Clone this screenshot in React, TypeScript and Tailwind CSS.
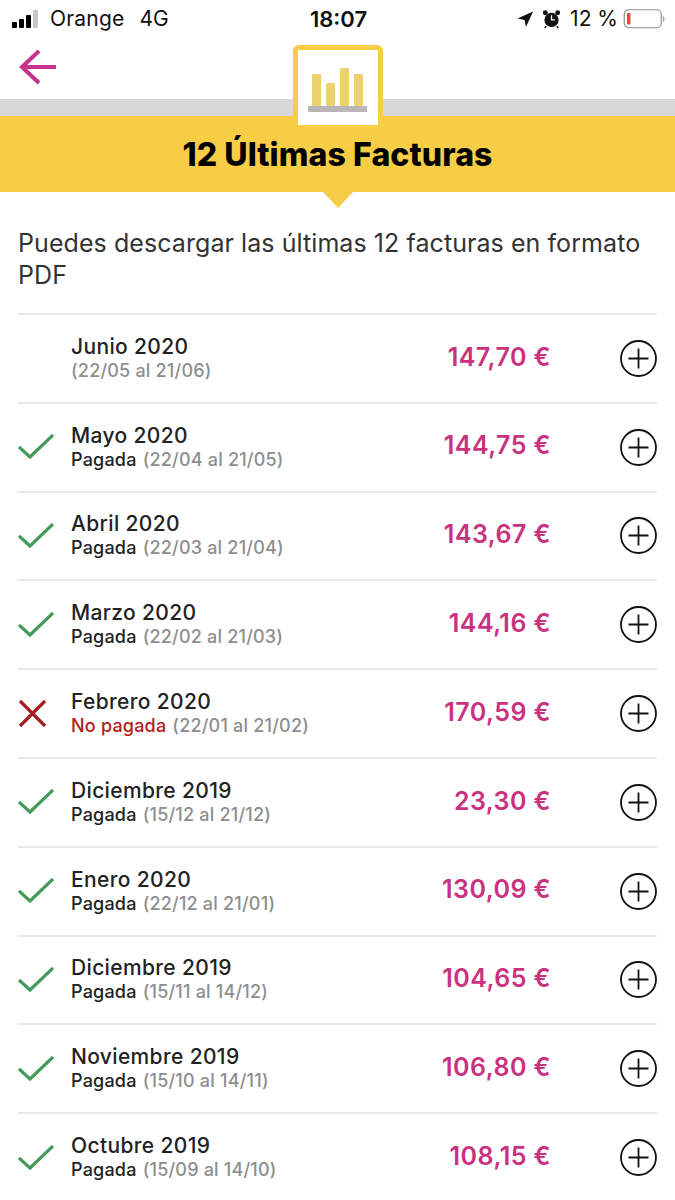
import React from "react";

type Status = "none" | "paid" | "unpaid";

interface Invoice {
  month: string;
  status: Status;
  period: string;
  amount: string;
}

const invoices: Invoice[] = [
  { month: "Junio 2020", status: "none", period: "(22/05 al 21/06)", amount: "147,70 €" },
  { month: "Mayo 2020", status: "paid", period: "(22/04 al 21/05)", amount: "144,75 €" },
  { month: "Abril 2020", status: "paid", period: "(22/03 al 21/04)", amount: "143,67 €" },
  { month: "Marzo 2020", status: "paid", period: "(22/02 al 21/03)", amount: "144,16 €" },
  { month: "Febrero 2020", status: "unpaid", period: "(22/01 al 21/02)", amount: "170,59 €" },
  { month: "Diciembre 2019", status: "paid", period: "(15/12 al 21/12)", amount: "23,30 €" },
  { month: "Enero 2020", status: "paid", period: "(22/12 al 21/01)", amount: "130,09 €" },
  { month: "Diciembre 2019", status: "paid", period: "(15/11 al 14/12)", amount: "104,65 €" },
  { month: "Noviembre 2019", status: "paid", period: "(15/10 al 14/11)", amount: "106,80 €" },
  { month: "Octubre 2019", status: "paid", period: "(15/09 al 14/10)", amount: "108,15 €" },
];

function StatusBar() {
  return (
    <div className="grid h-[38px] grid-cols-[1fr_auto_1fr] items-center pl-3 pr-[10px] text-[21px] text-[#111]">
      <div className="flex items-center">
        <div className="flex items-end gap-[2px]">
          <span className="h-[6px] w-[5px] rounded-[1px] bg-black" />
          <span className="h-[9px] w-[5px] rounded-[1px] bg-black" />
          <span className="h-[13px] w-[5px] rounded-[1px] bg-black" />
          <span className="h-[18px] w-[5px] rounded-[1px] bg-[#c8c8c8]" />
        </div>
        <span className="ml-[12px] tracking-[0.2px]">Orange</span>
        <span className="ml-[15px]">4G</span>
      </div>
      <span className="text-[22px] font-semibold">18:07</span>
      <div className="flex items-center justify-end">
        <svg width="17" height="17" viewBox="0 0 18 18" className="mr-[8px]">
          <path d="M0.5 8 L17 0.5 L9.5 17 L8 9.5 Z" fill="#111" />
        </svg>
        <svg width="19" height="20" viewBox="0 0 20 20" className="mr-[9px]">
          <circle cx="10" cy="11" r="7.5" fill="#111" />
          <circle cx="3.5" cy="3.5" r="2.6" fill="#111" />
          <circle cx="16.5" cy="3.5" r="2.6" fill="#111" />
          <path d="M10 6v5h3.5" stroke="#fff" strokeWidth="1.4" fill="none" />
          <path d="M4.5 17.5l-1.5 2M15.5 17.5l1.500 2" stroke="#111" strokeWidth="1.5" />
        </svg>
        <span>12 %</span>
        <svg width="42" height="20" viewBox="0 0 41 20" className="ml-[5px]">
          <rect x="0.75" y="0.75" width="37" height="18" rx="4.500" fill="none" stroke="#8e8e8e" strokeWidth="1.2" />
          <rect x="3.500" y="4" width="3.500" height="11.500" rx="1" fill="#e8473c" />
          <path d="M39.500 7v6c1.200-.6 1.500-2 1.500-3s-.3-2.400-1.500-3z" fill="#a0a0a0" />
        </svg>
      </div>
    </div>
  );
}

function Header() {
  return (
    <div className="relative h-[170px]">
      <div className="px-[19px] pt-[11px]">
        <svg width="38" height="36" viewBox="0 0 38 36" fill="none" stroke="#c8328c" strokeWidth="4">
          <path d="M37 18H3" />
          <path d="M20 2L3 18l17 16" />
        </svg>
      </div>
      <div className="absolute inset-x-0 top-[61px] h-[17px] bg-[#d8d8d8]" />
      <div className="absolute inset-x-0 top-[78px] flex h-[76px] items-center justify-center bg-[#f8cd46] pt-[1px]">
        <h1 className="text-[32px] font-extrabold tracking-[0.1px] text-black">12 Últimas Facturas</h1>
      </div>
      <div className="absolute left-[323px] top-[154px] h-0 w-0 border-x-[15px] border-t-[16px] border-x-transparent border-t-[#f8cd46]" />
      <div className="absolute left-[293px] top-[7px] flex h-[85px] w-[90px] flex-col items-center rounded-[6px] border-[5px] border-[#f8cd46] bg-white">
        <svg width="60" height="48" viewBox="0 0 60 48" className="mt-[18px]">
          <rect x="4" y="6" width="9" height="32" rx="1" fill="#ecd16f" />
          <rect x="18" y="15" width="9" height="23" rx="1" fill="#ecd16f" />
          <rect x="32" y="0" width="9" height="38" rx="1" fill="#ecd16f" />
          <rect x="46" y="6" width="9" height="32" rx="1" fill="#ecd16f" />
          <rect x="0" y="38" width="59" height="6" fill="#b8b6b6" />
        </svg>
      </div>
    </div>
  );
}

function StatusIcon({ status }: { status: Status }) {
  if (status === "paid") {
    return (
      <svg width="36" height="26" viewBox="0 0 36 26" fill="none" stroke="#439a59" strokeWidth="3.200">
        <path d="M1 13l11 10L35 1" />
      </svg>
    );
  }
  if (status === "unpaid") {
    return (
      <svg width="30" height="30" viewBox="0 0 30 30" fill="none" stroke="#a31f1f" strokeWidth="3.200">
        <path d="M2 2l25 25M27 2L2 27" />
      </svg>
    );
  }
  return null;
}

function InvoiceRow({ invoice }: { invoice: Invoice }) {
  return (
    <div className="flex h-[88.8px] items-center border-t-2 border-[#e9e9e9]">
      <div className="flex w-[53px] shrink-0 items-center">
        <StatusIcon status={invoice.status} />
      </div>
      <div className="mb-[2px] min-w-0 flex-1">
        <div className="text-[21px] leading-[27px] font-medium tracking-[0.35px] text-[#222]">{invoice.month}</div>
        <div className="text-[18px] leading-[22px] font-medium tracking-[0.2px] whitespace-nowrap">
          {invoice.status === "paid" && <span className="mr-[6px] text-[#222]">Pagada</span>}
          {invoice.status === "unpaid" && <span className="mr-[6px] text-[#b51c1c]">No pagada</span>}
          <span className="text-[#8e8e8e]">{invoice.period}</span>
        </div>
      </div>
      <div className="mr-[69px] mb-[2px] text-[25px] font-semibold tracking-[0.45px] whitespace-nowrap text-[#c9327f]">
        {invoice.amount}
      </div>
      <svg width="37" height="37" viewBox="0 0 37 37" fill="none" stroke="#111" strokeWidth="1.800" className="shrink-0">
        <circle cx="18.500" cy="18.500" r="17.500" />
        <path d="M18.500 8.500v20M8.500 18.500h20" />
      </svg>
    </div>
  );
}

export default function App() {
  return (
    <div className="h-[1200px] w-[675px] overflow-hidden bg-white font-['Inter',sans-serif]">
      <StatusBar />
      <Header />
      <div className="px-[18px]">
        <p className="mt-[19px] mb-[22px] text-[25px] leading-[32px] tracking-[0.07px] text-[#333]">
          Puedes descargar las últimas 12 facturas en formato PDF
        </p>
        {invoices.map((invoice, index) => (
          <InvoiceRow key={index} invoice={invoice} />
        ))}
      </div>
    </div>
  );
}
